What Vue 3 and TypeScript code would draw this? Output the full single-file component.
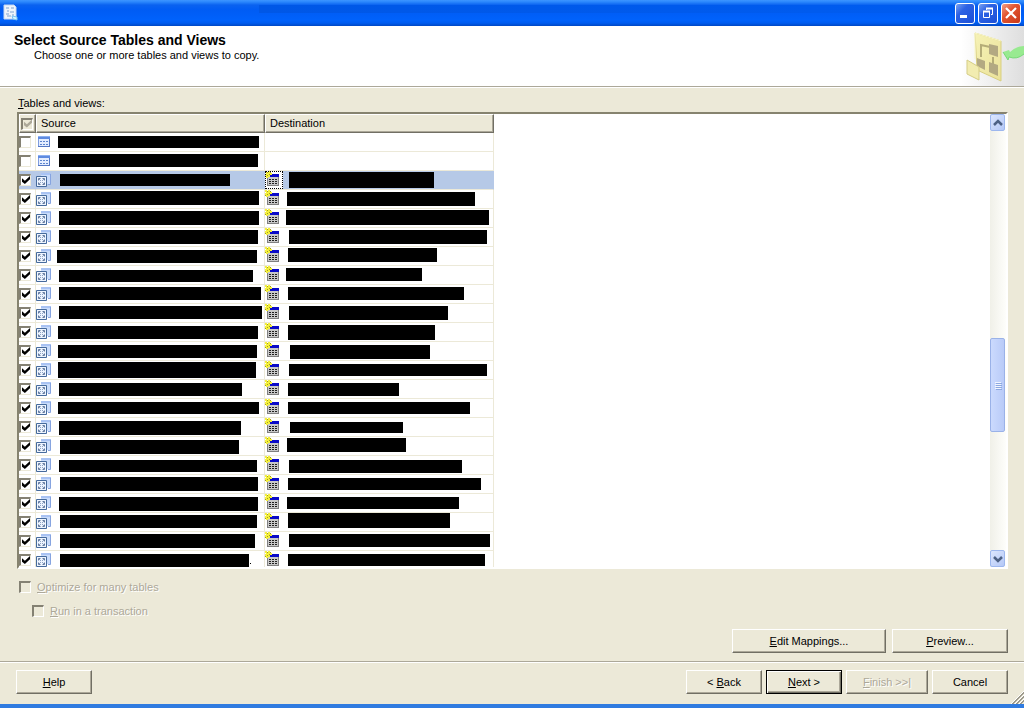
<script setup lang="ts">
import { ref } from 'vue'

interface Mark {
  x: number
  y: number
  w: number
  h: number
}

interface Row {
  checked: boolean
  source: Mark
  destination: Mark | null
}

const mark = (x: number, y: number, w: number, h: number): Mark => ({ x, y, w, h })

const row = (source: Mark, destination: Mark | null): Row => ({
  checked: destination !== null,
  source,
  destination,
})

// Masked names: position and size of each block inside its cell
const rows = ref<Row[]>([
  row(mark(4, 3, 201, 12), null),
  row(mark(5, 2, 199, 13), null),
  row(mark(6, 3, 170, 12), mark(6, 1, 145, 16)),
  row(mark(5, 1, 200, 14), mark(4, 2, 188, 14)),
  row(mark(5, 2, 200, 14), mark(3, 1, 203, 15)),
  row(mark(5, 2, 199, 14), mark(6, 2, 198, 14)),
  row(mark(3, 3, 200, 13), mark(5, 1, 149, 14)),
  row(mark(5, 4, 194, 12), mark(3, 2, 136, 13)),
  row(mark(5, 2, 202, 13), mark(5, 2, 176, 13)),
  row(mark(5, 2, 203, 13), mark(6, 2, 159, 14)),
  row(mark(4, 3, 200, 13), mark(5, 2, 147, 15)),
  row(mark(4, 3, 199, 13), mark(7, 3, 140, 14)),
  row(mark(4, 1, 198, 16), mark(6, 3, 198, 12)),
  row(mark(5, 3, 183, 13), mark(5, 3, 111, 13)),
  row(mark(4, 3, 201, 12), mark(5, 3, 182, 12)),
  row(mark(5, 3, 182, 14), mark(7, 4, 113, 11)),
  row(mark(6, 3, 179, 14), mark(4, 1, 119, 14)),
  row(mark(5, 4, 198, 12), mark(6, 4, 173, 13)),
  row(mark(6, 2, 198, 14), mark(5, 3, 193, 12)),
  row(mark(5, 3, 199, 14), mark(4, 3, 172, 12)),
  row(mark(6, 2, 197, 13), mark(5, 0, 162, 15)),
  row(mark(6, 2, 195, 14), mark(6, 2, 201, 13)),
  row(mark(6, 3, 189, 13), mark(5, 3, 197, 12)),
])

const selected = ref(2)
const allChecked = ref(true)
const optimize = ref(false)
const transaction = ref(false)
</script>

<template>
  <div class="window">
    <header class="titlebar">
      <svg class="app-icon" width="16" height="18" viewBox="0 0 16 18" aria-hidden="true">
        <path d="M1 1h10l2 2v12H1z" fill="#eef4fb" stroke="#c4d8f2" />
        <path d="M3 4h3M8 4h3M4 7h2M7 8h4M3 10h3M4 12h4M9 11h2" stroke="#7fa3cf" fill="none" />
        <path d="M9 12l5 1v3l-4-1z" fill="#d4f4ff" stroke="#79c3f3" />
      </svg>
      <div class="caption"></div>
      <div class="window-buttons">
        <button type="button" class="win-btn" aria-label="Minimize">
          <svg width="18" height="18" viewBox="0 0 18 18"><path d="M4 11h7v3H4z" fill="#fff" /></svg>
        </button>
        <button type="button" class="win-btn" aria-label="Restore">
          <svg width="18" height="18" viewBox="0 0 18 18" fill="none" stroke="#fff">
            <path d="M4.500 7.500h6v6h-6z" /><path d="M4 7.500h7" stroke-width="2" />
            <path d="M7.500 6V4.500h6v6H12" /><path d="M7 4.500h7" stroke-width="2" />
          </svg>
        </button>
        <button type="button" class="win-btn close" aria-label="Close">
          <svg width="18" height="18" viewBox="0 0 18 18"><path d="M4 4l10 10M14 4L4 14" stroke="#fff" stroke-width="2.200" /></svg>
        </button>
      </div>
    </header>

    <section class="banner">
      <div class="banner-text">
        <h1>Select Source Tables and Views</h1>
        <p>Choose one or more tables and views to copy.</p>
      </div>
      <svg class="banner-art" width="84" height="60" viewBox="0 0 84 60" aria-hidden="true">
        <defs>
          <linearGradient id="fade" x1="0" y1="0" x2="1" y2="0">
            <stop offset="0.250" stop-color="#fff" />
            <stop offset="1" stop-color="#dedede" />
          </linearGradient>
          <linearGradient id="sheet" x1="0" y1="0" x2="1" y2="1">
            <stop offset="0" stop-color="#f6f2b6" />
            <stop offset="1" stop-color="#ebe29a" />
          </linearGradient>
        </defs>
        <rect width="84" height="60" fill="url(#fade)" />
        <path d="M35 7l26 8v40l-24-11z" fill="url(#sheet)" stroke="#d8cf80" />
        <path d="M35 7l26 8M35 7v26" stroke="#fbf8c8" fill="none" />
        <path d="M41 31V19l9 2M53 31v9" stroke="#b5ad78" stroke-width="2" fill="none" />
        <path d="M49 18l9 2v11l-9-3zM37 32l8 3v9l-8-4zM49 36l9 3v11l-9-4z" fill="#b3a982" />
        <path d="M27 34l12 7v13l-12-6z" fill="#f2ecb0" stroke="#d5cd86" />
        <path d="M84 20q-8 0-14 6l-1-2-6 2 5 8 1-3q8 3 15-3z" fill="#98ea90" />
        <path d="M63 26l5 8 1-3q8 3 15-3" stroke="#78d878" fill="none" />
      </svg>
    </section>

    <main class="content">
      <div id="grid-label" class="grid-label"><u>T</u>ables and views:</div>

      <div class="grid">
        <div class="grid-view">
          <table aria-labelledby="grid-label">
            <colgroup>
              <col class="col-check" />
              <col class="col-name" />
              <col class="col-name" />
            </colgroup>
            <thead>
              <tr>
                <th class="head-check"><input v-model="allChecked" type="checkbox" class="check" disabled aria-labelledby="grid-label" /></th>
                <th id="col-source">Source</th>
                <th>Destination</th>
              </tr>
            </thead>
            <tbody>
              <tr v-for="(item, index) in rows" :key="index" :class="{ selected: index === selected }" @click="selected = index">
                <td class="cell-check"><input v-model="item.checked" type="checkbox" class="check" aria-labelledby="col-source" /></td>
                <td>
                  <div class="cell">
                    <svg v-if="item.destination" class="icon" width="18" height="18" viewBox="0 0 18 18">
                      <path d="M5 2h10v11H5z" fill="#c9dcfb" />
                      <path d="M5 2h10v2H5z" fill="#a9c3f3" />
                      <path d="M14.500 3v10.500H12" stroke="#86a4e0" fill="none" />
                      <path d="M0.500 5.500h10v10H0.500z" fill="#eef5ff" stroke="#456a9c" />
                      <path d="M2.500 9.500v-2h2M6.500 7.500h2v2M8.500 11.500v2h-2M4.500 13.500h-2v-2" stroke="#62789c" fill="none" />
                      <path d="M3 8l2 2M8 8l-2 2M3 13l2-2M8 13l-2-2" stroke="#8ea3c4" />
                    </svg>
                    <svg v-else class="icon" width="18" height="18" viewBox="0 0 18 18">
                      <path d="M2.500 3.500h11v10h-11z" fill="#e4edff" stroke="#7f9ddf" />
                      <path d="M2 3h12v3H2z" fill="#5f8be0" />
                      <path d="M2 3h12v1H2z" fill="#8db0f0" />
                      <path d="M4 8.500h2M7 8.500h2M10 8.500h2M4 11.500h2M7 11.500h2M10 11.500h2" stroke="#5c84ce" />
                      <path d="M2 13.500h12M13.500 6v7" stroke="#5578c4" />
                    </svg>
                    <svg class="mask" height="18">
                      <rect :x="item.source.x" :y="item.source.y" :width="item.source.w" :height="item.source.h" />
                      <rect v-if="index === rows.length - 1" x="196" y="12" width="1" height="1" />
                    </svg>
                  </div>
                </td>
                <td>
                  <div v-if="item.destination" class="cell">
                    <svg class="icon new-table" width="18" height="18" viewBox="0 0 18 18">
                      <path d="M2 4h12v11H2z" fill="#808080" />
                      <path d="M3 6h10v8H3z" fill="#c8c8c8" />
                      <path d="M5 3h9v3H5z" fill="#0a0ac8" />
                      <path d="M4 8.500h8M4 10.500h8M4 12.500h8" stroke="#202020" stroke-dasharray="2 1" />
                      <path d="M0 0h2v2h1V0h2v2h2v2H5v2H3v1H1V5H0V3h1V2H0z" fill="#f4f03c" />
                      <path d="M2 1h1v1H2zM5 1h1v1H5zM2 4h1v1H2zM0 5h1v1H0zM4 3h1v1H4z" fill="#a09c20" />
                    </svg>
                    <svg class="mask" height="18">
                      <rect :x="item.destination.x" :y="item.destination.y" :width="item.destination.w" :height="item.destination.h" />
                    </svg>
                  </div>
                </td>
              </tr>
            </tbody>
          </table>
        </div>
        <div class="scrollbar">
          <button type="button" class="scroll-btn" aria-label="Scroll up">
            <svg width="14" height="14" viewBox="0 0 14 14"><path d="M3 9l4-4 4 4" fill="none" stroke="#4d6185" stroke-width="2.500" /></svg>
          </button>
          <div class="track-before"></div>
          <div class="thumb"><i></i><i></i><i></i><i></i></div>
          <div class="track-after"></div>
          <button type="button" class="scroll-btn" aria-label="Scroll down">
            <svg width="14" height="14" viewBox="0 0 14 14"><path d="M3 5l4 4 4-4" fill="none" stroke="#4d6185" stroke-width="2.500" /></svg>
          </button>
        </div>
      </div>

      <div class="options">
        <label class="option"><input v-model="optimize" type="checkbox" class="check" disabled /><span><u>O</u>ptimize for many tables</span></label>
        <label class="option nested"><input v-model="transaction" type="checkbox" class="check" disabled /><span><u>R</u>un in a transaction</span></label>
      </div>

      <div class="actions">
        <button type="button" class="btn mappings"><span><u>E</u>dit Mappings...</span></button>
        <button type="button" class="btn preview"><span><u>P</u>review...</span></button>
      </div>
    </main>

    <footer class="footer">
      <button type="button" class="btn"><span><u>H</u>elp</span></button>
      <div class="nav">
        <button type="button" class="btn"><span>&lt; <u>B</u>ack</span></button>
        <button type="button" class="btn default"><span><u>N</u>ext &gt;</span></button>
        <button type="button" class="btn finish" disabled><span><u>F</u>inish &gt;&gt;|</span></button>
        <button type="button" class="btn"><span>Cancel</span></button>
      </div>
      <svg class="grip" width="13" height="13" viewBox="0 0 13 13" aria-hidden="true">
        <path d="M0 13L13 0M4 13l9-9M8 13l5-5" stroke="#fff" />
        <path d="M1 13L13 1M2 13L13 2M5 13l8-8M6 13l7-7M9 13l4-4M10 13l3-3" stroke="#9d9a8c" />
      </svg>
    </footer>
  </div>
</template>

<style>
body {
  margin: 0;
  background: #ece9d8;
}
</style>

<style scoped>
* {
  box-sizing: border-box;
}

.window {
  display: flex;
  flex-direction: column;
  height: 100vh;
  border-bottom: 4px solid #2f7be0;
  background: #ece9d8;
  color: #000;
  font: 11px/14px "Liberation Sans", Arial, sans-serif;
}

.titlebar {
  display: flex;
  flex: none;
  align-items: center;
  height: 26px;
  padding: 0 3px;
  background: linear-gradient(#3d95ff 0, #2a86fc 2px, #0a62f0 5px, #005cf4 10px, #0062fc 20px, #005cf0 23px, #0148c4 26px);
}

.app-icon {
  flex: none;
}

.caption {
  flex: 1;
  height: 8px;
  margin: 0 0 8px 240px;
  background: linear-gradient(90deg, #0057e6, #005cf0);
}

.window-buttons {
  display: flex;
  gap: 3px;
}

.win-btn {
  display: block;
  width: 20px;
  height: 21px;
  padding: 0;
  border: 1px solid #fff;
  border-radius: 3px;
  background: linear-gradient(135deg, #7aa2f2 0, #2d62e4 35%, #1c4fd6 100%);
}

.win-btn svg {
  display: block;
}

.win-btn.close {
  background: linear-gradient(135deg, #f0a088 0, #e25530 40%, #c8381a 100%);
}

.banner {
  display: flex;
  flex: none;
  justify-content: space-between;
  height: 62px;
  border-bottom: 1px solid #fff;
  background: #fff;
  box-shadow: inset 0 -1px #aca899;
}

.banner-text {
  padding: 6px 0 0 14px;
}

h1 {
  margin: 0;
  font-size: 14px;
  line-height: 16px;
}

p {
  margin: 0 0 0 20px;
}

.content {
  display: flex;
  flex: 1;
  flex-direction: column;
  min-height: 0;
  padding: 8px 16px 8px 17px;
}

.grid-label {
  flex: none;
  height: 16px;
  padding-left: 1px;
}

.grid {
  display: flex;
  flex: 1;
  min-height: 0;
  border: 2px solid;
  border-color: #86836f #fff #fff #86836f;
  background: #fff;
}

.grid-view {
  flex: 1;
  overflow: hidden;
}

table {
  width: 475px;
  border-spacing: 0;
  table-layout: fixed;
}

.col-check {
  width: 17px;
}

.col-name {
  width: 229px;
}

th {
  height: 19px;
  padding: 0 0 2px 4px;
  border: 1px solid;
  border-color: #fff #716f64 #716f64 #fff;
  background: #ece9d8;
  box-shadow: inset -1px -1px #aca899;
  font-weight: normal;
  line-height: 14px;
  text-align: left;
}

td {
  height: 19px;
  padding: 0;
  border-right: 1px solid #ece9d8;
  border-bottom: 1px solid #ece9d8;
}

.head-check {
  padding: 0 0 0 1px;
}

.cell-check {
  vertical-align: middle;
}

.selected td {
  border-right-color: #b6c9e7;
  background: #b6c9e7;
}

.cell {
  display: flex;
  height: 18px;
}

.icon {
  flex: none;
}

.mask {
  flex: 1;
  width: 100%;
  min-width: 0;
}

.selected .new-table {
  background: #fff;
  outline: 1px dotted #000;
  outline-offset: -1px;
}

.check {
  display: block;
  flex: none;
  width: 12px;
  height: 12px;
  margin: 0;
  border: 2px solid;
  border-color: #848173 #ece9d8 #ece9d8 #848173;
  border-right-width: 1px;
  border-bottom-width: 1px;
  background: #fff;
  appearance: none;
}

.check:disabled {
  border-color: #848173 #fff #fff #848173;
  background: #ece9d8;
}

.check:checked::after {
  display: block;
  width: 8px;
  height: 8px;
  margin: 0 0 0 1px;
  background: #000;
  clip-path: polygon(0 28%, 36% 58%, 100% 0, 100% 42%, 36% 100%, 0 71%);
  content: "";
}

.check:disabled:checked::after {
  background: #aca899;
}

.options {
  display: flex;
  flex: none;
  flex-direction: column;
  gap: 10px;
  padding: 11px 0 0 2px;
}

.option {
  display: flex;
  gap: 6px;
  align-items: center;
  color: #aca899;
  text-shadow: 1px 1px #fff;
}

.nested {
  padding-left: 13px;
}

.actions {
  display: flex;
  flex: none;
  gap: 6px;
  justify-content: flex-end;
  padding-top: 11px;
}

.btn {
  width: 76px;
  height: 24px;
  padding: 0;
  border: 1px solid;
  border-color: #fff #716f64 #716f64 #fff;
  background: #ece9d8;
  box-shadow: inset -1px -1px #aca899;
  color: #000;
  font: inherit;
}

.mappings {
  width: 154px;
}

.preview {
  width: 116px;
}

.finish {
  width: 82px;
}

.default {
  border-color: #000;
  box-shadow: inset 1px 1px #fff, inset -1px -1px #716f64, inset -2px -2px #aca899;
}

.btn:disabled {
  color: #aca899;
  text-shadow: 1px 1px #fff;
}

.footer {
  position: relative;
  display: flex;
  flex: none;
  justify-content: space-between;
  height: 43px;
  padding: 8px 16px 0;
  border-top: 1px solid #aca899;
  box-shadow: inset 0 1px #fff;
}

.nav {
  display: flex;
  gap: 4px;
}

.grip {
  position: absolute;
  right: 0;
  bottom: 0;
}

.scrollbar {
  display: flex;
  flex: none;
  flex-direction: column;
  width: 16px;
  background: linear-gradient(90deg, #f0f0e8, #fefefb);
}

.scroll-btn {
  display: grid;
  flex: none;
  width: 15px;
  height: 17px;
  padding: 0;
  place-items: center;
  border: 1px solid #9db7ee;
  border-radius: 2px;
  background: linear-gradient(135deg, #dce6fe, #b4c8f6);
}

.track-before {
  flex: 208;
}

.track-after {
  flex: 118;
}

.thumb {
  display: flex;
  flex: none;
  flex-direction: column;
  gap: 1px;
  align-items: center;
  justify-content: center;
  width: 15px;
  height: 94px;
  border: 1px solid #9ab2e8;
  border-radius: 2px;
  background: linear-gradient(90deg, #cbdafd, #b9cbf8);
}

.thumb i {
  width: 6px;
  height: 1px;
  background: #f2f6ff;
  box-shadow: 1px 1px #8ca8e0;
}
</style>
